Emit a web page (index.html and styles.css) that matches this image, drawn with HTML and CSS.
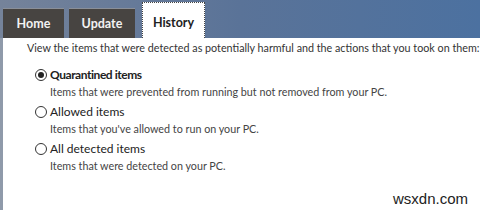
FILE: index.html
```html
<!DOCTYPE html>
<html>

<head>
	<title>History</title>
	<link rel="stylesheet" href="styles.css">
</head>

<body>
	<div class="window">
		<div class="tabbar">
			<div class="tab">Home</div>
			<div class="tab">Update</div>
			<div class="tab active">History</div>
		</div>
		<div class="panel">
			<p class="intro">View the items that were detected as potentially harmful and the actions that you took on them:</p>
			<div class="option">
				<label class="choice"><span class="radio checked"></span>Quarantined items</label>
				<p class="desc">Items that were prevented from running but not removed from your PC.</p>
			</div>
			<div class="option">
				<label class="choice"><span class="radio"></span>Allowed items</label>
				<p class="desc">Items that you've allowed to run on your PC.</p>
			</div>
			<div class="option">
				<label class="choice"><span class="radio"></span>All detected items</label>
				<p class="desc">Items that were detected on your PC.</p>
			</div>
			<div class="watermark">wsxdn.com</div>
		</div>
	</div>
</body>

</html>
```

FILE: styles.css
```css
* {
	margin: 0px;
	padding: 0px;
	box-sizing: border-box;
}

body {
	font-family: Lato, "Open Sans", sans-serif;
	font-size: 10.75px;
	color: #333;
	background: #fff;
}

.window {
	width: 480px;
	height: 210px;
	display: flex;
	flex-direction: column;
	overflow: hidden;
}

.tabbar {
	height: 38px;
	flex-shrink: 0;
	display: flex;
	align-items: flex-end;
	gap: 5px;
	padding-left: 3px;
	background: linear-gradient(to right, #75839a, #5a7398 50%, #4c71a0);
}

.tab {
	width: 61px;
	height: 30px;
	background: #474441;
	color: #f2f2f2;
	font-weight: bold;
	font-size: 12.5px;
	display: flex;
	align-items: center;
	justify-content: center;
	border-top: 1px solid #8a8f98;
}

.tab:nth-child(2) {
	width: 66px;
}

.tab.active {
	width: 63px;
	height: 36px;
	margin-left: 2px;
	background: #fff;
	color: #222;
	border: 1px dotted #444;
	border-bottom: none;
	padding-top: 3px;
}

.panel {
	flex: 1;
	position: relative;
	border-left: 3px solid #8f9aaa;
	padding: 2px 0 0 24px;
}

.intro {
	white-space: nowrap;
	line-height: 16px;
	margin-bottom: 10px;
}

.option {
	margin-bottom: 3px;
}

.choice {
	display: flex;
	align-items: center;
	gap: 3px;
	margin-left: 8px;
	font-size: 12px;
	line-height: 17px;
	color: #222;
}

.option:first-of-type .choice {
	font-weight: bold;
	letter-spacing: -0.45px;
}

.radio {
	width: 12px;
	height: 12px;
	border: 1px solid #333;
	border-radius: 50%;
	display: flex;
	align-items: center;
	justify-content: center;
}

.radio.checked::after {
	content: "";
	width: 6px;
	height: 6px;
	border-radius: 50%;
	background: #222;
}

.desc {
	margin-left: 23px;
	line-height: 17px;
	color: #444;
}

.watermark {
	position: absolute;
	right: 12px;
	bottom: 3px;
	font-family: "Liberation Sans", Arial, sans-serif;
	font-size: 15px;
	color: #222;
}
```
